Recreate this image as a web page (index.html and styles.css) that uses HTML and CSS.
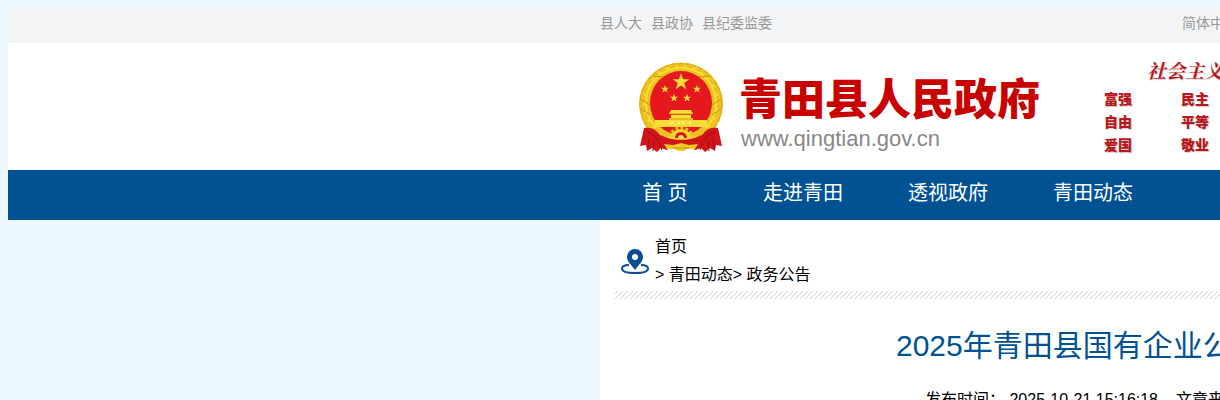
FILE: index.html
```html
<!DOCTYPE html>
<html lang="zh-CN">
<head>
<meta charset="utf-8">
<title>2025年青田县国有企业公告</title>
<link rel="stylesheet" href="styles.css">
</head>
<body>
<div class="topbar">
  <div class="inner topbar-row">
    <div class="top-links"><a href="#">县人大</a><a href="#">县政协</a><a href="#">县纪委监委</a></div>
    <a href="#">简体中文</a>
  </div>
</div>
<header class="header">
  <div class="inner header-row">
    <svg class="emblem" viewBox="0 0 84 92" aria-hidden="true">
      <defs>
        <path id="star" d="M0-10 2.4-3.2 9.5-3.1 3.8 1.2 5.9 8.1 0 4-5.9 8.1-3.8 1.2-9.5-3.1-2.4-3.2Z"/>
      </defs>
      <ellipse cx="42" cy="42" rx="42" ry="41.500" fill="#ecc01f"/>
      <ellipse cx="42" cy="42" rx="41" ry="40.500" fill="none" stroke="#d9a317" stroke-width="1" stroke-dasharray="4 3"/>
      <ellipse cx="42" cy="41" rx="36" ry="36" fill="none" stroke="#f6d934" stroke-width="4"/>
      <ellipse cx="42" cy="41" rx="37" ry="37" fill="none" stroke="#dba919" stroke-width="1" stroke-dasharray="6 3"/>
      <path d="M1 37l12 7M83 37l-12 7M14 14l11 1M70 14l-11 1M1 46l10 7M83 46l-10 7" stroke="#c9920f"/>
      <ellipse cx="42" cy="41" rx="31" ry="32" fill="#e5191d"/>
      <g fill="#f9dc35">
        <use href="#star" transform="translate(42 20) scale(.88)"/>
        <use href="#star" transform="translate(26 27) scale(.42)"/>
        <use href="#star" transform="translate(58 27) scale(.42)"/>
        <use href="#star" transform="translate(35 36) scale(.42)"/>
        <use href="#star" transform="translate(48 36) scale(.42)"/>
        <path d="M32 48h20l2 4H30zM32 53h20v3H32zM30 56h24v3H30zM16 58h52v7H16z"/>
      </g>
      <path d="M31 52h22M30 57h24" stroke="#d19a12"/>
      <path d="M32 61h2M39 61h2M43 61h2M50 61h2" stroke="#fff4ae" stroke-width="2"/>
      <path d="M5 66c8-1 12 2 15 6 6 6 14 7 22 7s16-1 22-7c3-4 7-7 15-6l4 18-6-1-1 6-5-3-5 4-4-4-6 2-4-3-5 2H37l-5-2-4 3-6-2-4 4-5-4-5 3-1-6-6 1z" fill="#d1141a"/>
      <path d="M7 70c6 0 9 4 12 9M77 70c-6 0-9 4-12 9M10 76l-1 11M15 78l-1 11M20 80l3 8M74 76l1 11M69 78l1 11M64 80l-3 8" stroke="#9c0f14" fill="none"/>
      <path d="M17 66c6 7 15 8 25 8s19-1 25-8" stroke="#edbf22" stroke-width="3" fill="none"/>
      <path d="M31 77a11 10 0 0 1 22 0z" fill="#f6d332"/>
      <path d="M31 75a11 9 0 0 1 22 0" fill="none" stroke="#f0c722" stroke-width="3" stroke-dasharray="3 2"/>
      <path d="M36 76a6 6 0 0 1 12 0z" fill="#d1141a"/><path d="M39 76a3 3 0 0 1 6 0z" fill="#f8e04b"/>
      <path d="M21 75c7 4 13 5 21 5s14-1 21-5" stroke="#d1141a" stroke-width="4" fill="none"/>
      <path d="M25 82l9 1 8-2 8 2 9-1-3 5h-8l-3 2h-6l-3-2h-8z" fill="#f1c722"/>
      <path d="M34 86h16" stroke="#c98d10"/>
    </svg>
    <div class="brand">
      <h1 class="site-name">青田县人民政府</h1>
      <p class="site-url">www.qingtian.gov.cn</p>
    </div>
    <div class="values">
      <p class="values-title">社会主义核心价值观</p>
      <div class="values-grid">
        <span>富强</span><span>民主</span><span>自由</span><span>平等</span><span>爱国</span><span>敬业</span>
      </div>
    </div>
  </div>
</header>
<nav class="nav">
  <div class="inner nav-row">
    <a class="home" href="#">首 页</a><a href="#">走进青田</a><a href="#">透视政府</a><a href="#">青田动态</a>
  </div>
</nav>
<main class="inner content">
  <div class="crumbs">
    <svg class="pin" viewBox="0 0 30 28" aria-hidden="true">
      <path d="M9 18C4 18 2 19.500 2 21.500 2 24.500 8 26 15 26s13-1.500 13-4.500C28 19.500 26 18 21 18" fill="none" stroke="#0b4c92" stroke-width="2"/>
      <path fill-rule="evenodd" d="M15 2a8 8 0 0 0-8 8c0 5 4 7 8 13 4-6 8-8 8-13a8 8 0 0 0-8-8zm0 5a3 3 0 1 1 0 6 3 3 0 0 1 0-6z" fill="#0b4c92"/>
    </svg>
    <div class="trail"><a href="#">首页</a><div>&gt; <a href="#">青田动态</a>&gt; <a href="#">政务公告</a></div></div>
  </div>
  <svg class="rule" aria-hidden="true">
    <defs><pattern id="hatch" width="5" height="8" patternUnits="userSpaceOnUse"><path d="M-5 8L3 0M0 8L8 0" stroke="#cfcfcf" fill="none"/></pattern></defs>
    <rect width="100%" height="8" fill="url(#hatch)"/>
  </svg>
  <article class="article">
    <h2 class="title">2025年青田县国有企业公告</h2>
    <p class="meta"><span>发布时间： 2025-10-21 15:16:18</span><span>文章来源</span></p>
  </article>
</main>
</body>
</html>
```
FILE: styles.css
```css
html {
  background: #ebf8ff;
  overflow: hidden;
}
body {
  margin: 8px 0 0 8px;
  font-family: "Liberation Sans", "Noto Sans CJK SC", sans-serif;
  font-size: 16px;
  color: #000;
  white-space: nowrap;
}
h1, h2, p { margin: 0; font-weight: normal; }
a { color: inherit; text-decoration: none; }
.inner { margin-left: calc(50% - 14px); }

.topbar {
  background: #f3f4f6;
  color: #999;
  font-size: 14px;
  line-height: 30px;
  height: 35px;
}
.topbar-row { display: flex; justify-content: space-between; margin-right: -18px; }
.top-links { display: flex; gap: 9px; }

.header { background: #fff; overflow: hidden; }
.header-row {
  display: flex;
  align-items: flex-start;
  padding: 19px 0 13px 39px;
}
.emblem { flex: none; width: 84px; height: 92px; }
.brand { flex: none; width: 346px; padding: 12px 0 0 16px; }
.site-name {
  color: #c80000;
  font-size: 43px;
  line-height: 52px;
  font-weight: 900;
}
.site-url { color: #888; font-size: 22px; line-height: 26px; padding-left: 2px; }
.values { flex: none; color: #b9161c; text-shadow: 1px 1px 1px #ccc; padding-left: 19px; }
.values-title {
  padding-left: 43px;
  font-family: "Liberation Serif", "Noto Serif CJK SC", "Noto Sans CJK SC", serif;
  font-size: 19px;
  line-height: 20px;
  font-weight: bold;
  font-style: italic;
}
.values-grid {
  display: grid;
  grid-template-columns: 77px 77px;
  padding-top: 6px;
  font-size: 14px;
  line-height: 23px;
  font-weight: 900;
}

.nav { background: #005293; color: #fff; font-size: 20px; }
.nav-row { display: flex; gap: 65px; padding-left: 32px; line-height: 46px; height: 50px; }
.home { width: 66px; text-align: center; }

.content { background: #fff; padding: 13px 0 0 15px; min-height: 200px; }
.crumbs { display: flex; align-items: center; gap: 5px; padding-left: 5px; line-height: 28px; }
.pin { width: 30px; height: 28px; }
.rule { display: block; width: 100%; height: 8px; margin-top: 2px; }
.article { padding: 27px 0 0 281px; }
.title { color: #005293; font-size: 30px; line-height: 40px; }
.meta { display: flex; gap: 18px; padding: 20px 0 0 29px; line-height: 28px; }
```
